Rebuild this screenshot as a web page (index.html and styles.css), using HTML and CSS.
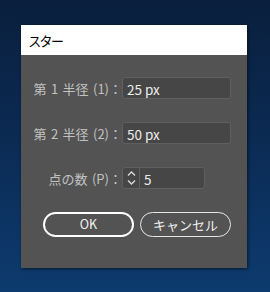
FILE: index.html
```html
<!DOCTYPE html>
<html lang="ja">
<head>
<meta charset="utf-8">
<link rel="stylesheet" href="styles.css">
</head>
<body>
<div class="dialog">
  <div class="titlebar">スター</div>
  <div class="content">
    <div class="row">
      <label class="label">第 1 半径 (1)：</label>
      <div class="field">25 px</div>
    </div>
    <div class="row">
      <label class="label">第 2 半径 (2)：</label>
      <div class="field">50 px</div>
    </div>
    <div class="row">
      <label class="label">点の数 (P)：</label>
      <div class="field spin">
        <div class="spin-btn">
          <svg width="9" height="18" viewBox="0 0 9 18"><path d="M1 6.5 L4.5 3 L8 6.5" fill="none" stroke="#dcdcdc" stroke-width="1.3"/><path d="M1 11.5 L4.5 15 L8 11.5" fill="none" stroke="#dcdcdc" stroke-width="1.3"/></svg>
        </div>
        <span class="spin-val">5</span>
      </div>
    </div>
    <div class="buttons">
      <button class="btn btn-default">OK</button>
      <button class="btn">キャンセル</button>
    </div>
  </div>
</div>
</body>
</html>
```

FILE: styles.css
```css
html, body {
  margin: 0;
}
body {
  width: 270px;
  height: 292px;
  box-sizing: border-box;
  padding: 25px 0 0 21px;
  background: linear-gradient(180deg, #0a1f3d 0%, #0b2a52 45%, #0d3b6f 100%);
  font-family: "Noto Sans CJK JP", "Noto Sans", sans-serif;
  overflow: hidden;
}
.dialog {
  width: 226px;
  height: 243px;
  display: flex;
  flex-direction: column;
  background: #535353;
  box-shadow: 1px 1px 3px rgba(0, 0, 0, 0.55);
}
.titlebar {
  height: 30px;
  flex: none;
  background: #ffffff;
  display: flex;
  align-items: center;
  padding-left: 8px;
  font-size: 13px;
  color: #000;
  font-feature-settings: "palt";
  letter-spacing: -0.5px;
}
.content {
  flex: 1;
  display: flex;
  flex-direction: column;
  gap: 23px;
  padding-top: 22px;
}
.row {
  display: grid;
  grid-template-columns: 101px auto;
  align-items: center;
}
.label {
  text-align: right;
  font-size: 13px;
  color: #c2c2c2;
  white-space: nowrap;
  word-spacing: 1.5px;
}
.field {
  width: 109px;
  height: 22px;
  box-sizing: border-box;
  background: #464646;
  border: 1px solid #5f5f5f;
  border-radius: 3px;
  color: #ececec;
  font-size: 13.5px;
  display: flex;
  align-items: center;
  padding: 1px 0 0 4px;
}
.spin {
  width: 83px;
  padding: 0;
}
.spin-btn {
  width: 17px;
  height: 100%;
  box-sizing: border-box;
  border-right: 1px solid #5f5f5f;
  display: flex;
  align-items: center;
  justify-content: center;
}
.spin-btn svg {
  display: block;
}
.spin-val {
  padding: 1px 0 0 4px;
}
.buttons {
  display: flex;
  gap: 6px;
  padding-left: 22px;
}
.btn {
  width: 91px;
  height: 25px;
  box-sizing: border-box;
  background: transparent;
  border: 1.5px solid #e6e6e6;
  border-radius: 13px;
  color: #f0f0f0;
  font-family: "Noto Sans CJK JP", "Noto Sans", sans-serif;
  font-size: 13px;
  padding: 0;
  line-height: 1;
}
.btn-default {
  border: 2px solid #ffffff;
  font-size: 12.5px;
}
```
